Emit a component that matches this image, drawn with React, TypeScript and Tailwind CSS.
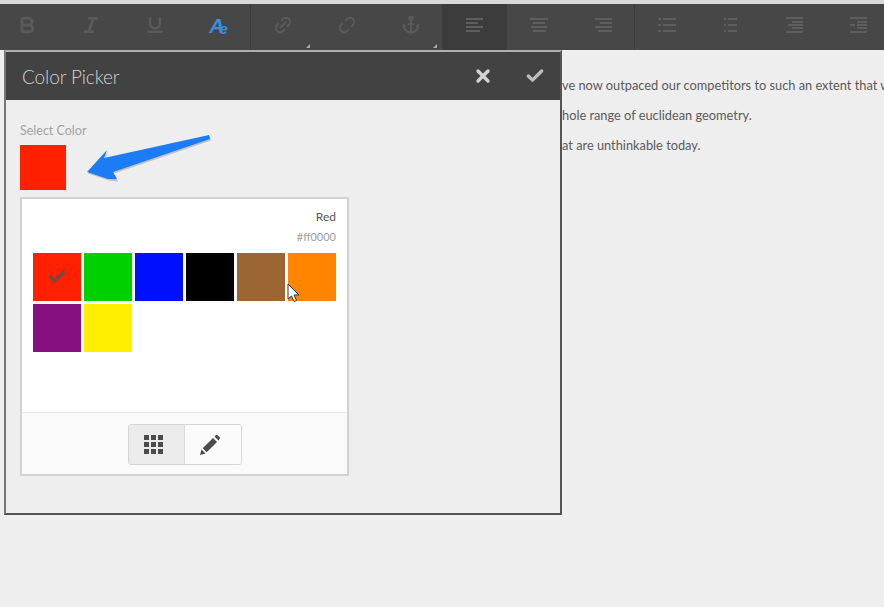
import { Anchor, Bold, Check, Italic, Link2, Underline, Unlink2, X } from 'lucide-react';

const swatches = ['#ff2000', '#00d000', '#0010ff', '#000000', '#9b6534', '#ff8400', '#86107f', '#fff000'];

// [x, y, width] of each 2px bar in an 18x16 box
const barIcons: Record<string, number[][]> = {
    left: [[0, 1, 17], [0, 5, 12], [0, 9, 17], [0, 13, 14]],
    center: [[0, 1, 18], [3, 5, 12], [1, 9, 16], [3, 13, 13]],
    right: [[1, 1, 17], [6, 5, 12], [1, 9, 17], [4, 13, 14]],
    bullets: [[0, 1, 3], [5, 1, 13], [0, 7, 3], [5, 7, 13], [0, 13, 3], [5, 13, 13]],
    numbers: [[2, 1, 2], [6, 1, 9], [2, 7, 2], [6, 7, 9], [2, 13, 2], [6, 13, 9]],
    outdent: [[0, 0, 17], [6, 4, 11], [2, 7, 15], [6, 10, 11], [0, 14, 17]],
    indent: [[0, 0, 17], [7, 4, 10], [0, 7, 5], [7, 7, 10], [7, 10, 10], [0, 14, 17]],
};

function Bars({ name }: { name: string }) {
    return (
        <svg width="18" height="16" viewBox="0 0 18 16" fill="#5e5e5e">
            {barIcons[name].map(([x, y, w]) => (
                <rect key={`${x}-${y}`} x={x} y={y} width={w} height="2" />
            ))}
        </svg>
    );
}

function ToolButton({ children, active, split, corner }: { children: React.ReactNode; active?: boolean; split?: boolean; corner?: boolean }) {
    return (
        <div className={`relative flex h-[46px] w-16 shrink-0 items-center justify-center pb-[4px] text-[#5a5a5a] ${active ? 'bg-[#3c3c3c]' : ''} ${split ? 'border-r border-[#3d3d3d]' : ''}`}>
            {children}
            {corner && <span className="absolute bottom-[2px] right-[5px] h-0 w-0 border-b-[4px] border-l-[4px] border-b-[#aaaaaa] border-l-transparent" />}
        </div>
    );
}

export default function App() {
    return (
        <div className="relative h-[607px] w-[884px] overflow-hidden bg-[#eeeeee] font-['Lato',sans-serif]">
            <div className="h-[4px] bg-[#d8d8d8]" />
            <div className="-ml-[5px] flex h-[46px] bg-[#474747]">
                <ToolButton><Bold size={20} strokeWidth={3.5} /></ToolButton>
                <ToolButton><Italic size={20} strokeWidth={3.5} /></ToolButton>
                <ToolButton><Underline size={20} strokeWidth={3} /></ToolButton>
                <ToolButton split>
                    <span className="flex items-end font-['Liberation_Sans',sans-serif] font-bold italic leading-none text-[#3a8fdc]">
                        <span className="text-[21px]">A</span>
                        <span className="-ml-[5px] text-[15px]">e</span>
                    </span>
                </ToolButton>
                <ToolButton corner><Link2 size={20} strokeWidth={2.5} className="-rotate-45" /></ToolButton>
                <ToolButton><Unlink2 size={20} strokeWidth={2.5} className="-rotate-45" /></ToolButton>
                <ToolButton corner split><Anchor size={20} strokeWidth={2.5} /></ToolButton>
                <ToolButton active><Bars name="left" /></ToolButton>
                <ToolButton><Bars name="center" /></ToolButton>
                <ToolButton split><Bars name="right" /></ToolButton>
                <ToolButton><Bars name="bullets" /></ToolButton>
                <ToolButton><Bars name="numbers" /></ToolButton>
                <ToolButton><Bars name="outdent" /></ToolButton>
                <ToolButton><Bars name="indent" /></ToolButton>
            </div>

            <div className="ml-[562px] flex flex-col gap-[11px] whitespace-nowrap pt-[26px] text-[12.8px] leading-[19px] text-[#5a5a5a]">
                <p>ve now outpaced our competitors to such an extent that we</p>
                <p>hole range of euclidean geometry.</p>
                <p>at are unthinkable today.</p>
            </div>

            <div className="absolute left-[4px] top-[50px] h-[465px] w-[558px] border-2 border-b-[#555555] border-l-[#777777] border-r-[#555555] border-t-[#b0b0b0] bg-[#eeeeee]">
                <div className="flex h-[48px] items-center bg-[#424242] pl-[16px] text-[#d2d2d2]">
                    <span className="flex-1 pt-[3px] text-[19px] font-light tracking-[-0.1px]">Color Picker</span>
                    <X size={20} strokeWidth={4} className="mr-[32px]" />
                    <Check size={20} strokeWidth={4} className="mr-[15px] text-[#bdbdbd]" />
                </div>

                <div className="px-[14px] pt-[23px]">
                    <p className="text-[12.5px] leading-[15px] text-[#a3a3a3]">Select Color</p>
                    <div className="mt-[7px] h-[45px] w-[46px] bg-[#ff2000]" />

                    <div className="mt-[7px] w-[329px] border-2 border-[#d2d2d2] bg-white">
                        <div className="h-[213px] px-[11px] pt-[9px]">
                            <p className="text-right text-[12px] leading-[18px] text-[#555555]">Red</p>
                            <p className="mt-[2px] text-right text-[11px] leading-[18px] text-[#a0a0a0]">#ff0000</p>
                            <div className="mt-[7px] grid grid-cols-[repeat(6,48px)] gap-[3px]">
                                {swatches.map((color, i) => (
                                    <div key={color} className="flex h-[48px] items-center justify-center" style={{ backgroundColor: color }}>
                                        {i === 0 && <Check size={20} strokeWidth={4} className="text-[#6d4a42]" />}
                                    </div>
                                ))}
                            </div>
                        </div>
                        <div className="flex h-[62px] items-center justify-center border-t border-[#eaeaea] bg-[#fafafa] pt-[2px]">
                            <div className="flex h-[41px] w-[114px] overflow-hidden rounded-[3px] border border-[#d5d5d5]">
                                <div className="flex w-[56px] items-center justify-center border-r border-[#dddddd] bg-[#ebebeb] pr-[5px] text-[#4b4b4b]">
                                    <svg width="19" height="19" viewBox="0 0 19 19" fill="currentColor">
                                        <rect x="0" y="0" width="5" height="5" />
                                        <rect x="7" y="0" width="5" height="5" />
                                        <rect x="14" y="0" width="5" height="5" />
                                        <rect x="0" y="7" width="5" height="5" />
                                        <rect x="7" y="7" width="5" height="5" />
                                        <rect x="14" y="7" width="5" height="5" />
                                        <rect x="0" y="14" width="5" height="5" />
                                        <rect x="7" y="14" width="5" height="5" />
                                        <rect x="14" y="14" width="5" height="5" />
                                    </svg>
                                </div>
                                <div className="flex flex-1 items-center justify-center bg-[#fbfbfb] pr-[5px] text-[#4b4b4b]">
                                    <svg width="20" height="20" viewBox="0 0 20 20" fill="currentColor">
                                        <path d="M0 20 L1.5 14.5 L5.5 18.5 Z" />
                                        <path d="M2.7 13.3 L13 3 L17 7 L6.7 17.3 Z" />
                                        <path d="M14.5 1.5 L16 0 Q17 -0.5 18 0.5 L19.5 2 Q20.5 3 19.5 4 L18.5 5.5 Z" />
                                    </svg>
                                </div>
                            </div>
                        </div>
                    </div>
                </div>
            </div>

            {/* annotation arrow */}
            <svg className="absolute left-[80px] top-[130px]" width="135" height="55" viewBox="80 130 135 55">
                <polygon points="87,172 107,150 104,158 209,135 210,139 113,172 117,180 108,179" fill="#555555" opacity="0.3" transform="translate(1 1.5)" />
                <polygon points="87,172 107,150 104,158 209,135 210,139 113,172 117,179 108,179" fill="#1c7cf5" />
            </svg>

            {/* mouse pointer */}
            <svg className="absolute left-[287px] top-[283px]" width="13" height="20" viewBox="0 0 13 20">
                <path d="M1 1 L1 16 L4.5 13 L7 18.5 L9.5 17.5 L7 12 L12 12 Z" fill="#ffffff" stroke="#333333" strokeWidth="1" />
            </svg>
        </div>
    );
}
